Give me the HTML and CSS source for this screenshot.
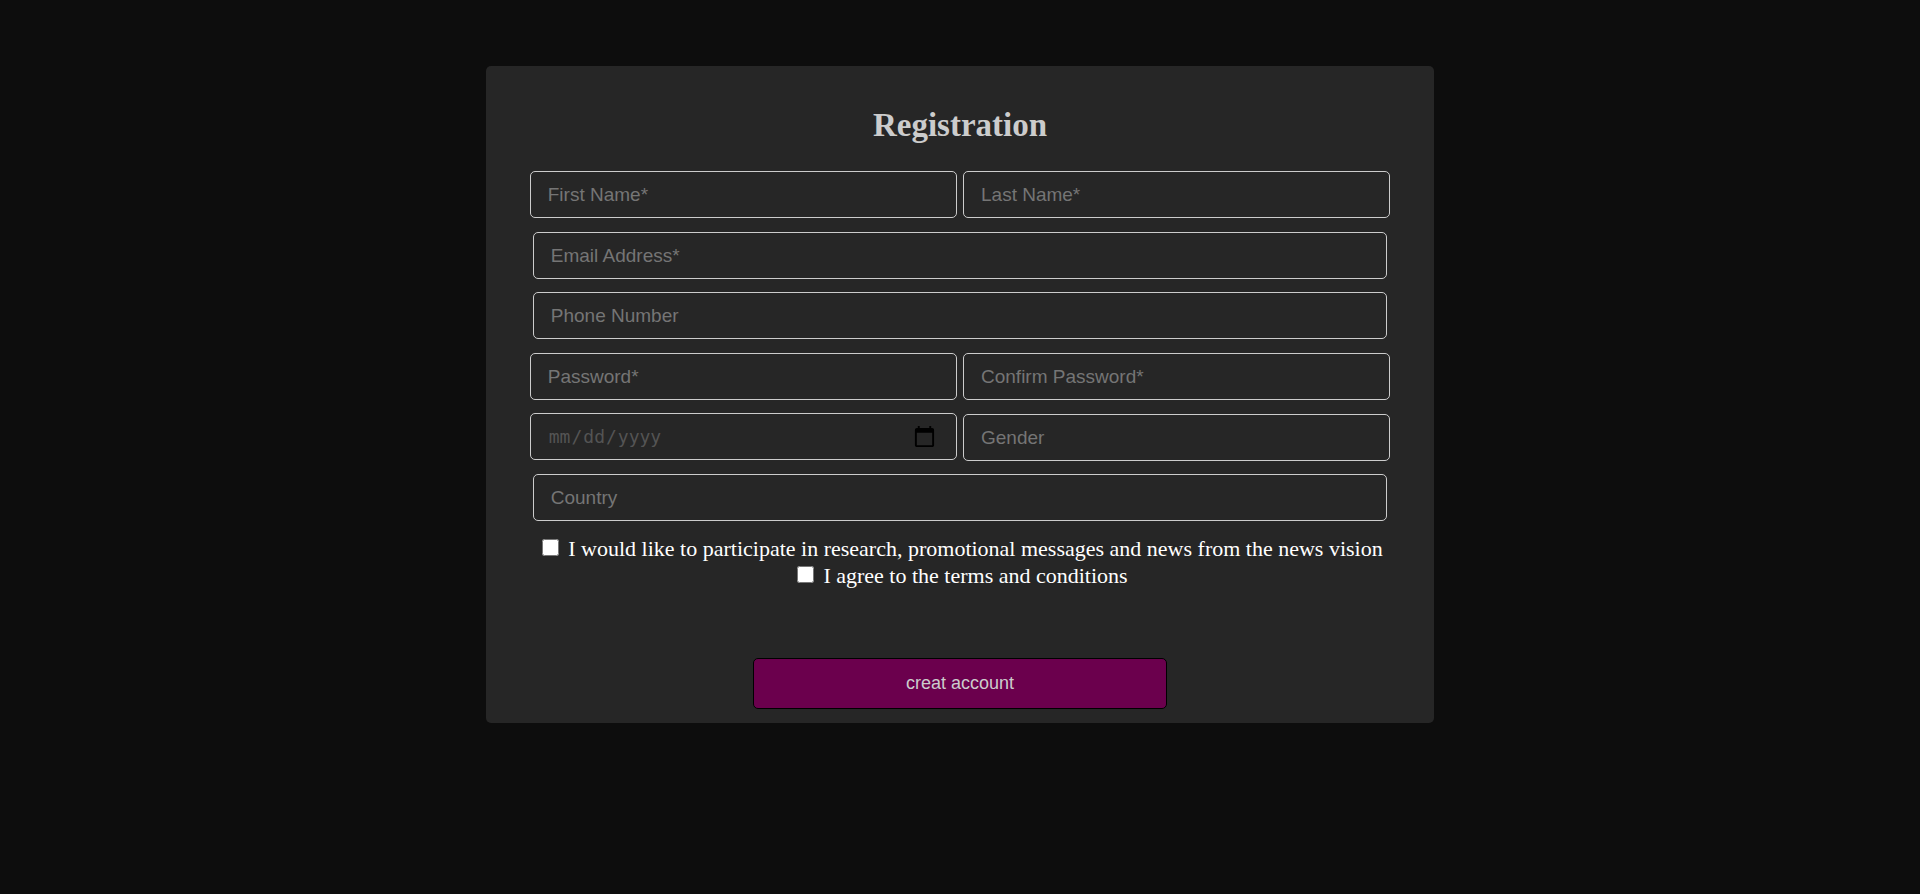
FILE: index.html
```html
<!DOCTYPE html>
<html lang="en">
<head>
<meta charset="utf-8">
<meta name="viewport" content="width=device-width, initial-scale=1">
<title>Registration</title>
<link rel="stylesheet" href="styles.css">
</head>
<body>
<main class="card">
  <h1 class="title">Registration</h1>
  <form class="form">
    <div class="row">
      <input class="field" type="text" placeholder="First Name*" aria-label="First Name">
      <input class="field" type="text" placeholder="Last Name*" aria-label="Last Name">
    </div>
    <div class="row row-full">
      <input class="field" type="email" placeholder="Email Address*" aria-label="Email Address">
    </div>
    <div class="row row-full">
      <input class="field" type="tel" placeholder="Phone Number" aria-label="Phone Number">
    </div>
    <div class="row row-end">
      <input class="field" type="password" placeholder="Password*" aria-label="Password">
      <input class="field" type="password" placeholder="Confirm Password*" aria-label="Confirm Password">
    </div>
    <div class="row row-end">
      <input class="field field-date" type="date" aria-label="Date of birth">
      <input class="field" type="text" placeholder="Gender" aria-label="Gender">
    </div>
    <div class="row row-full">
      <input class="field" type="text" placeholder="Country" aria-label="Country">
    </div>
    <div class="checks">
      <div class="check">
        <input class="box" type="checkbox" id="news">
        <label for="news">I would like to participate in research, promotional messages and news from the news vision</label>
      </div>
      <div class="check">
        <input class="box" type="checkbox" id="terms">
        <label for="terms">I agree to the terms and conditions</label>
      </div>
    </div>
    <button class="submit" type="submit">creat account</button>
  </form>
</main>
</body>
</html>
```
FILE: styles.css
```css
* {
  box-sizing: border-box;
}

body {
  margin: 0;
  padding: 66px 0 16px;
  background: #0d0d0d;
  color: #fff;
  font-family: "Liberation Serif", "Times New Roman", serif;
}

.card {
  width: 49.4%;
  min-width: 320px;
  margin: 0 auto;
  padding: 40px 44px 14px;
  border-radius: 5px;
  background: #262626;
}

.title {
  margin: 0 0 27px;
  color: #ccc;
  font-size: 33px;
  line-height: 38px;
  text-align: center;
}

.form {
  display: flex;
  flex-direction: column;
  gap: 13px;
}

.row {
  display: flex;
  align-items: flex-start;
  gap: 6px;
  min-height: 48px;
}

.row-end {
  align-items: flex-end;
}

.row-full {
  min-height: 47px;
  padding: 0 3px;
}

.field {
  flex: 1 1 0;
  min-width: 0;
  height: 47px;
  padding: 0 17px;
  border: 1px solid #ccc;
  border-radius: 5px;
  background: transparent;
  color: #ccc;
  font-family: "Liberation Sans", Arial, sans-serif;
  font-size: 19px;
}

.field::placeholder {
  color: #757575;
}

.field-date {
  align-self: flex-start;
  color: #545454;
  font-family: "DejaVu Sans Mono", monospace;
  font-size: 18px;
}

.field-date::-webkit-calendar-picker-indicator {
  width: 23px;
  height: 23px;
  margin-right: 3px;
  padding: 0;
  background-size: 23px 23px;
}

.checks {
  padding: 1px 0 0 5px;
  font-size: 22px;
  line-height: 27px;
}

.check {
  display: flex;
  justify-content: center;
  align-items: center;
  gap: 9px;
}

.box {
  flex: none;
  width: 17px;
  height: 17px;
  margin: 0 0 2px;
}

.submit {
  align-self: center;
  width: 48%;
  height: 51px;
  margin-top: 56px;
  border: 1px solid #000;
  border-radius: 5px;
  background: #6b004d;
  color: #ccc;
  font-family: "Liberation Sans", Arial, sans-serif;
  font-size: 18px;
}
```
